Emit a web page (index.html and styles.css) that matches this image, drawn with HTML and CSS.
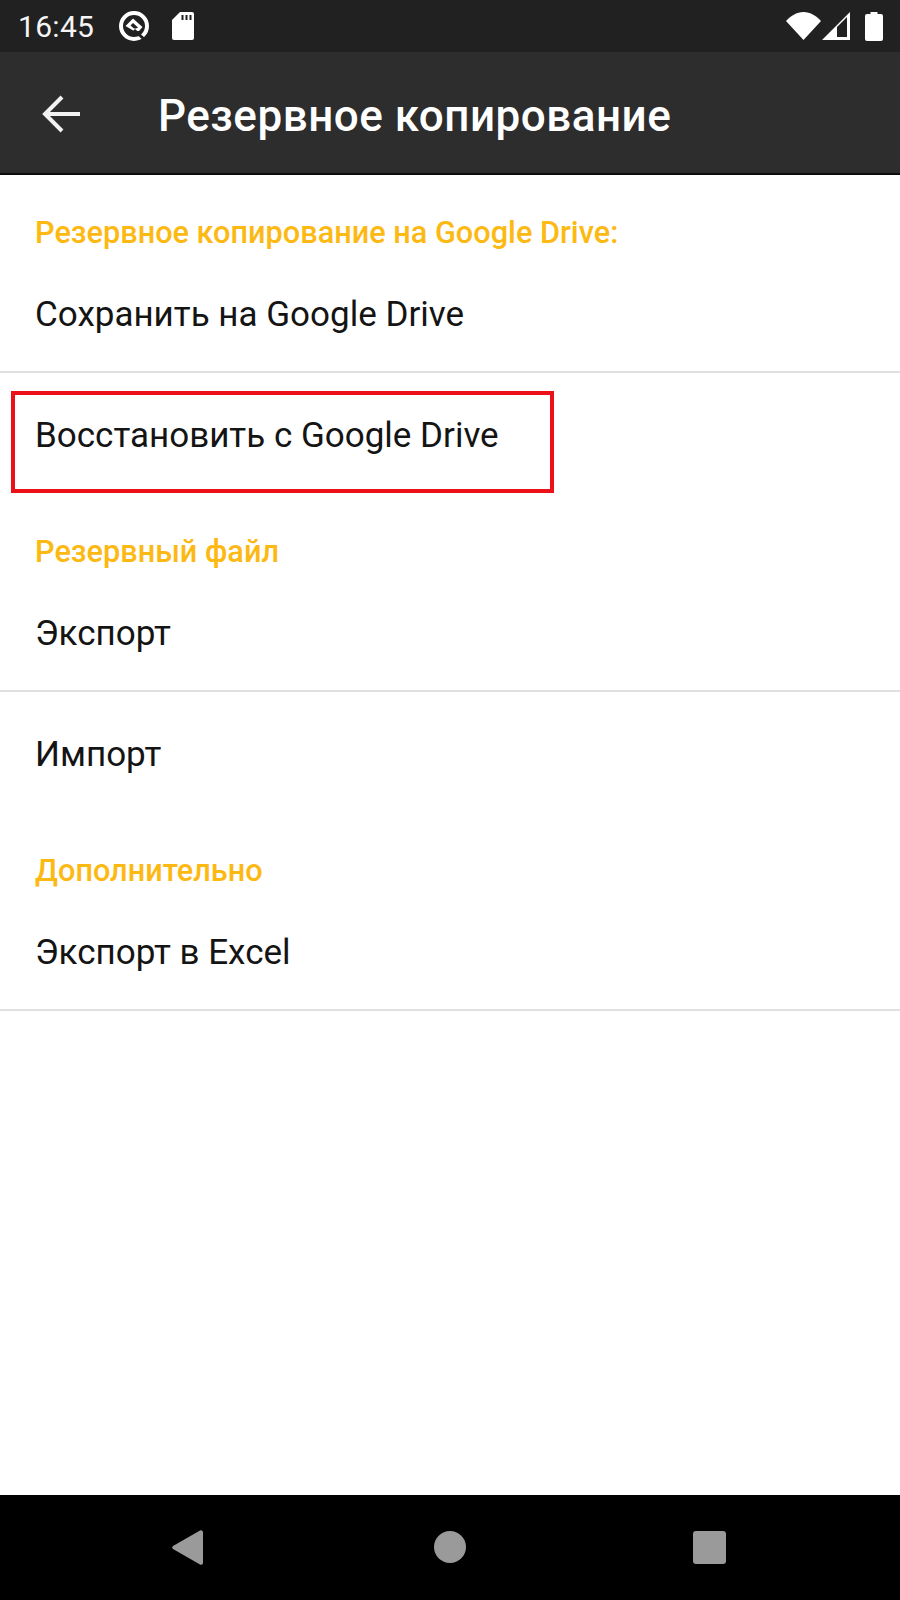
FILE: index.html
```html
<!DOCTYPE html>
<html lang="ru">
<head>
<meta charset="utf-8">
<title>Резервное копирование</title>
<link rel="stylesheet" href="styles.css">
</head>
<body>
<div class="screen">
  <header class="status">
    <div class="status-left">
      <span class="clock">16:45</span>
      <svg class="ic-q" viewBox="0 0 32 32"><circle cx="16" cy="16" r="13" fill="none" stroke="#fff" stroke-width="4"/><path d="M7.500 16 15 8.500 24.500 17 21 21H16z" fill="#fff"/><path d="M12.500 15.500 15 13l5 4.500-2 1h-2z" fill="#212121"/><path d="M16 20 27 30" fill="none" stroke="#212121" stroke-width="3"/></svg>
      <svg class="ic-sd" viewBox="0 0 22 28"><path d="M8 0h12a2 2 0 0 1 2 2v24a2 2 0 0 1-2 2H2a2 2 0 0 1-2-2V8z" fill="#fff"/><path d="M9.500 3h2v5h-2zM13.500 3h2v5h-2zM17.500 3h2v5h-2z" fill="#212121"/></svg>
    </div>
    <div class="status-right">
      <svg class="ic-wifi" viewBox="0 0 35 28"><path d="M0 9C4.500 4 10.500 0 17.500 0S30.500 4 35 9L17.500 28z" fill="#fff"/></svg>
      <svg class="ic-signal" viewBox="0 0 28 28"><path fill-rule="evenodd" d="M28 0v28H0zM15 25h10V5l-10 10z" fill="#fff"/></svg>
      <svg class="ic-batt" viewBox="0 0 18 29"><path d="M5.500 0h7v2H16a2 2 0 0 1 2 2v23a2 2 0 0 1-2 2H2a2 2 0 0 1-2-2V4a2 2 0 0 1 2-2h3.500z" fill="#fff"/></svg>
    </div>
  </header>
  <div class="toolbar">
    <svg class="ic-back" viewBox="0 0 40 40"><path d="M38 20H4M20 3 3 20l17 17" fill="none" stroke="#f2f2f2" stroke-width="4"/></svg>
    <h1 class="title">Резервное копирование</h1>
  </div>
  <main class="content">
    <section class="group">
      <h2 class="label">Резервное копирование на Google Drive:</h2>
      <div class="row row-line">Сохранить на Google Drive</div>
      <div class="row row-after">Восстановить с Google Drive<span class="mark"></span></div>
    </section>
    <section class="group">
      <h2 class="label">Резервный файл</h2>
      <div class="row row-line">Экспорт</div>
      <div class="row row-after">Импорт</div>
    </section>
    <section class="group">
      <h2 class="label">Дополнительно</h2>
      <div class="row row-line">Экспорт в Excel</div>
    </section>
  </main>
  <nav class="navbar">
    <svg class="ic-nav-back" viewBox="0 0 31 35"><path d="M28 .5 1 16a2 2 0 0 0 0 3l27 15.500a2 2 0 0 0 3-1.500V2a2 2 0 0 0-3-1.500z" fill="#9a9a9a"/></svg>
    <span class="nav-home"></span>
    <span class="nav-recent"></span>
  </nav>
</div>
</body>
</html>
```
FILE: styles.css
```css
* { box-sizing: border-box; }
html, body { margin: 0; padding: 0; }
body { font-family: Roboto, "Liberation Sans", sans-serif; background: #fff; }
.screen { width: 900px; height: 1600px; display: flex; flex-direction: column; overflow: hidden; }

.status { height: 52px; flex: none; background: #212121; display: flex; justify-content: space-between; align-items: center; padding: 0 17px 0 18px; color: #fff; }
.status-left, .status-right { display: flex; align-items: center; }
.clock { font-size: 30px; letter-spacing: 0.3px; color: #f5f5f5; }
.ic-q { width: 32px; height: 32px; margin-left: 23.500px; }
.ic-sd { width: 22px; height: 28px; margin-left: 22.500px; }
.ic-wifi { width: 35px; height: 28px; }
.ic-signal { width: 28px; height: 28px; margin-left: 1px; }
.ic-batt { width: 18px; height: 29px; margin-left: 15px; }

.toolbar { height: 123px; flex: none; background: #2d2d2d; border-bottom: 2px solid #0c0c0c; display: flex; align-items: center; padding-left: 42px; }
.ic-back { width: 40px; height: 40px; flex: none; margin-top: 2px; filter: blur(0.6px); }
.title { margin: 7px 0 0 76px; font-size: 44px; font-weight: 500; color: #fff; letter-spacing: 0.5px; }

.content { flex: 1; background: #fff; }
.group { display: flex; flex-direction: column; }
.label { margin: 0; height: 80px; padding: 36px 0 0 35px; font-size: 30.700px; line-height: 44px; font-weight: 500; color: #fdb913; }
.row { padding-left: 35px; font-size: 35px; color: #141414; display: flex; align-items: center; position: relative; }
.row-line { height: 118px; padding-top: 3px; border-bottom: 2px solid #e0e0e0; }
.row-after { height: 121px; padding-top: 3px; }
.mark { position: absolute; left: 11px; top: 18px; width: 543px; height: 102px; border: 4.500px solid #ec1018; }

.navbar { height: 105px; flex: none; background: #000; position: relative; }
.ic-nav-back { width: 31px; height: 35px; position: absolute; left: 172px; top: 35px; }
.nav-home { width: 32px; height: 32px; border-radius: 50%; background: #9a9a9a; position: absolute; left: 434px; top: 36px; }
.nav-recent { width: 33px; height: 33px; border-radius: 3px; background: #9a9a9a; position: absolute; left: 693px; top: 36px; }
```
